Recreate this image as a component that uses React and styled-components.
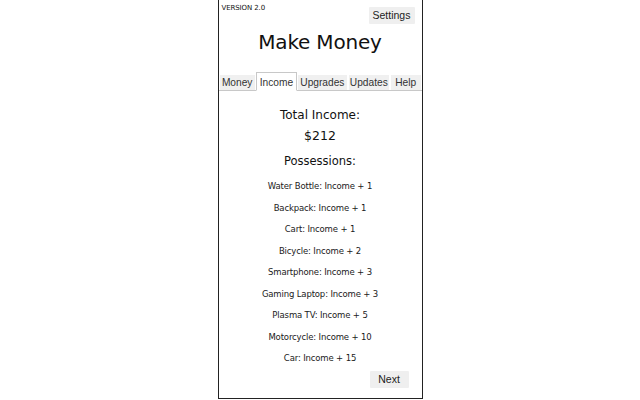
import React, { useState } from 'react';
import styled, { createGlobalStyle } from 'styled-components';

const GlobalStyle = createGlobalStyle`
  html, body {
    margin: 0;
    padding: 0;
    background: #ffffff;
  }
  body {
    font-family: "DejaVu Sans", sans-serif;
  }
`;

const Panel = styled.div`
  box-sizing: border-box;
  width: 205px;
  height: 399px;
  margin: 0 auto;
  border: 1px solid #222;
  border-top: none;
  display: flex;
  flex-direction: column;
  color: #111;
`;

const Header = styled.header`
  position: relative;
  height: 72px;
  display: flex;
  flex-direction: column;
  align-items: center;
`;

const Version = styled.span`
  align-self: flex-start;
  margin: 4px 0 0 3px;
  font-size: 7px;
  line-height: 9px;
  letter-spacing: -0.1px;
`;

const GrayButton = styled.button`
  display: block;
  font-family: "Liberation Sans", Arial, sans-serif;
  font-size: 10.5px;
  line-height: 17px;
  color: #222;
  background: #efefef;
  border: none;
  border-radius: 1px;
  height: 17px;
  padding: 0;
  width: ${({ $w }) => $w}px;
  cursor: pointer;
`;

const SettingsSlot = styled.div`
  position: absolute;
  top: 7px;
  right: 7px;
`;

const Title = styled.h1`
  margin: 16px 0 0;
  font-weight: normal;
  font-size: 20px;
  line-height: 26px;
  letter-spacing: -0.2px;
`;

const Tabs = styled.nav`
  display: flex;
  align-items: flex-end;
  height: 18px;
  border-bottom: 1px solid #c8c8c8;
`;

const Tab = styled.button`
  flex: ${({ $grow }) => $grow} 1 0;
  min-width: 0;
  box-sizing: border-box;
  height: ${({ $active }) => ($active ? '19px' : '16px')};
  margin-bottom: ${({ $active }) => ($active ? '-1px' : '0')};
  padding: ${({ $active }) => ($active ? '2px 0 0' : '0')};
  font-family: "Liberation Sans", Arial, sans-serif;
  font-size: 10.2px;
  line-height: 14px;
  color: #333;
  background: ${({ $active }) => ($active ? '#ffffff' : '#f0f0f0')};
  border: 1px solid ${({ $active }) => ($active ? '#c8c8c8' : '#ffffff')};
  border-bottom: ${({ $active }) => ($active ? '1px solid #ffffff' : 'none')};
  cursor: pointer;
`;

const Content = styled.main`
  flex: 1;
  display: flex;
  flex-direction: column;
  align-items: center;
  padding-top: 14px;
`;

const Heading = styled.div`
  font-size: ${({ $size }) => $size}px;
  line-height: ${({ $lh }) => $lh}px;
`;

const ItemList = styled.ul`
  list-style: none;
  margin: 1px 0 0;
  padding: 0;
  text-align: center;
`;

const Item = styled.li`
  font-size: 8.5px;
  line-height: 21.5px;
  letter-spacing: -0.15px;
  color: #1a1a1a;
`;

const Footer = styled.div`
  align-self: stretch;
  display: flex;
  justify-content: flex-end;
  padding: 1px 13px 0 0;
`;

const tabs = [
  { name: 'Money', grow: 37 },
  { name: 'Income', grow: 41 },
  { name: 'Upgrades', grow: 51 },
  { name: 'Updates', grow: 42 },
  { name: 'Help', grow: 31 },
];

const possessions = [
  ['Water Bottle', 1],
  ['Backpack', 1],
  ['Cart', 1],
  ['Bicycle', 2],
  ['Smartphone', 3],
  ['Gaming Laptop', 3],
  ['Plasma TV', 5],
  ['Motorcycle', 10],
  ['Car', 15],
];

export default function App() {
  const [active, setActive] = useState('Income');

  return (
    <>
      <GlobalStyle />
      <Panel>
        <Header>
          <Version>VERSION 2.0</Version>
          <SettingsSlot>
            <GrayButton $w={46}>Settings</GrayButton>
          </SettingsSlot>
          <Title>Make Money</Title>
        </Header>
        <Tabs>
          {tabs.map(t => (
            <Tab
              key={t.name}
              $grow={t.grow}
              $active={active === t.name}
              onClick={() => setActive(t.name)}
            >
              {t.name}
            </Tab>
          ))}
        </Tabs>
        <Content>
          <Heading $size={12} $lh={20}>Total Income:</Heading>
          <Heading $size={12.5} $lh={22}>$212</Heading>
          <Heading $size={11.5} $lh={28}>Possessions:</Heading>
          <ItemList>
            {possessions.map(([name, amount]) => (
              <Item key={name}>{name}: Income + {amount}</Item>
            ))}
          </ItemList>
          <Footer>
            <GrayButton $w={39}>Next</GrayButton>
          </Footer>
        </Content>
      </Panel>
    </>
  );
}
